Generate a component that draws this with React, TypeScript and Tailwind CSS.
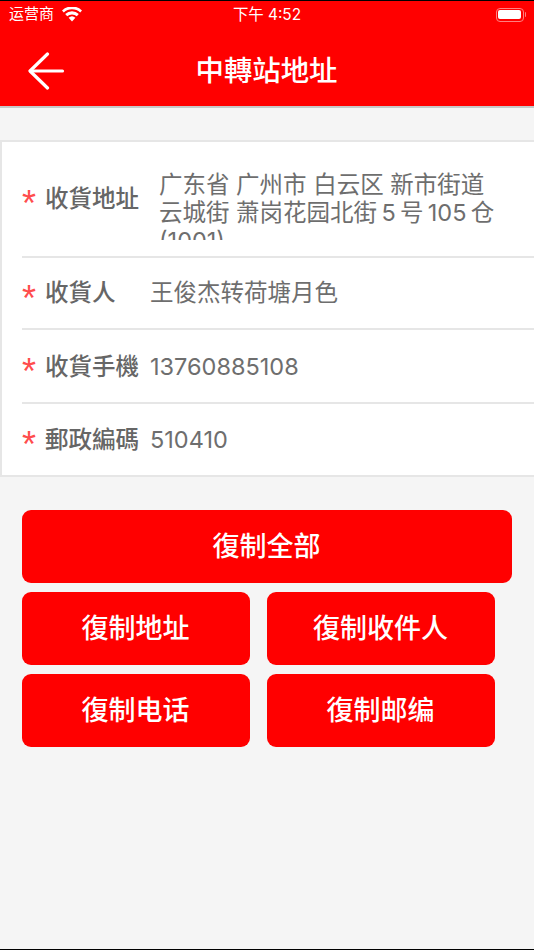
const font = "font-['Inter','Noto_Sans_CJK_SC',sans-serif]";

function Row({ label, children, h, border = true, valueClass }: { label: string; children: React.ReactNode; h: string; border?: boolean; valueClass: string }) {
  return (
    <div className={`flex items-center ml-5 ${h} ${border ? 'border-b-2 border-[#e6e6e6]' : ''}`}>
      <span className="w-6 shrink-0 h-[25px] text-[36px] leading-[36px] text-[#ff4d4d] font-['Liberation_Sans',sans-serif]">*</span>
      <span className="w-[105px] shrink-0 ml-[-1px] text-[23.5px] font-medium text-[#666666]">{label}</span>
      <div className={`text-[23.5px] text-[#6e6e6e] ${valueClass}`}>{children}</div>
    </div>
  );
}

function Btn({ children, className }: { children: React.ReactNode; className: string }) {
  return (
    <button className={`h-[73px] pt-[2px] pr-[1px] rounded-[9px] bg-[#ff0000] text-white text-[27px] font-medium flex items-center justify-center ${className}`}>
      {children}
    </button>
  );
}

export default function App() {
  return (
    <div className={`${font} w-[534px] h-[950px] bg-[#f5f5f5] flex flex-col overflow-hidden border-t border-b border-black`}>
      <header className="bg-[#ff0000] h-[105px] shrink-0 border-b-2 border-[#c8c8c8] box-content text-white">
        <div className="h-[27px] flex items-center justify-between pl-[9px] pr-[10px] relative">
          <div className="flex items-center gap-2 text-[15px]">
            <span>运营商</span>
            <svg width="20" height="15" viewBox="0 0 20 15" fill="#fff">
              <path d="M10 14.5 6.6 10.8a5 5 0 0 1 6.8 0L10 14.5Z" />
              <path d="M5.2 9.2 3.2 7a10 10 0 0 1 13.6 0l-2 2.2a7.3 7.3 0 0 0-9.6 0Z" />
              <path d="M1.8 5.4 0 3.4a14.6 14.6 0 0 1 20 0l-1.8 2a12 12 0 0 0-16.4 0Z" />
            </svg>
          </div>
          <span className="absolute left-0 right-0 text-center text-[15.4px]">下午 4:52</span>
          <div className="flex items-center gap-px mr-[-2px]">
            <div className="w-7 h-[14px] rounded-[4px] border border-[#ff8080] p-[1.5px]">
              <div className="w-full h-full rounded-[2px] bg-white" />
            </div>
            <div className="w-[1.5px] h-[5px] bg-[#ff8080] rounded-r" />
          </div>
        </div>
        <div className="relative h-[78px] flex items-center justify-center">
          <svg className="absolute left-[27px] top-[24px]" width="38" height="38" viewBox="0 0 38 38" fill="none" stroke="#fff" strokeWidth="3.2" strokeLinecap="round" strokeLinejoin="round">
            <path d="M20.5 2 3 19 20.5 36" />
            <path d="M3.5 19H35.5" />
          </svg>
          <h1 className="text-[28.4px] font-medium pt-[9px] mr-[1px]">中轉站地址</h1>
        </div>
      </header>

      <section className="mt-[32px] h-[337px] bg-white border-2 border-r-0 border-[#e6e6e6] flex flex-col">
        <Row label="收貨地址" h="h-[116px]" valueClass="self-start mt-[29px] ml-[9px] w-[345px] h-[69px] overflow-hidden leading-[28px]">
          广东省 广州市 白云区 新市街道 云城街 萧岗花园北街{'\u200a\u200a'}5{'\u200a\u200a'}号{'\u200a\u200a'}105{'\u200a\u200a'}仓 (1001)
        </Row>
        <Row label="收貨人" h="h-[73px]" valueClass="">王俊杰转荷塘月色</Row>
        <Row label="收貨手機" h="h-[74px]" valueClass="">13760885108</Row>
        <Row label="郵政編碼" h="h-[71px]" border={false} valueClass="">510410</Row>
      </section>

      <div className="mt-[33px] mx-[22px] flex flex-col gap-[9px]">
        <Btn className="w-[490px]">復制全部</Btn>
        <div className="grid grid-cols-[228px_228px] gap-x-[17px] gap-y-[9px]">
          <Btn className="">復制地址</Btn>
          <Btn className="">復制收件人</Btn>
          <Btn className="">復制电话</Btn>
          <Btn className="">復制邮编</Btn>
        </div>
      </div>
    </div>
  );
}
